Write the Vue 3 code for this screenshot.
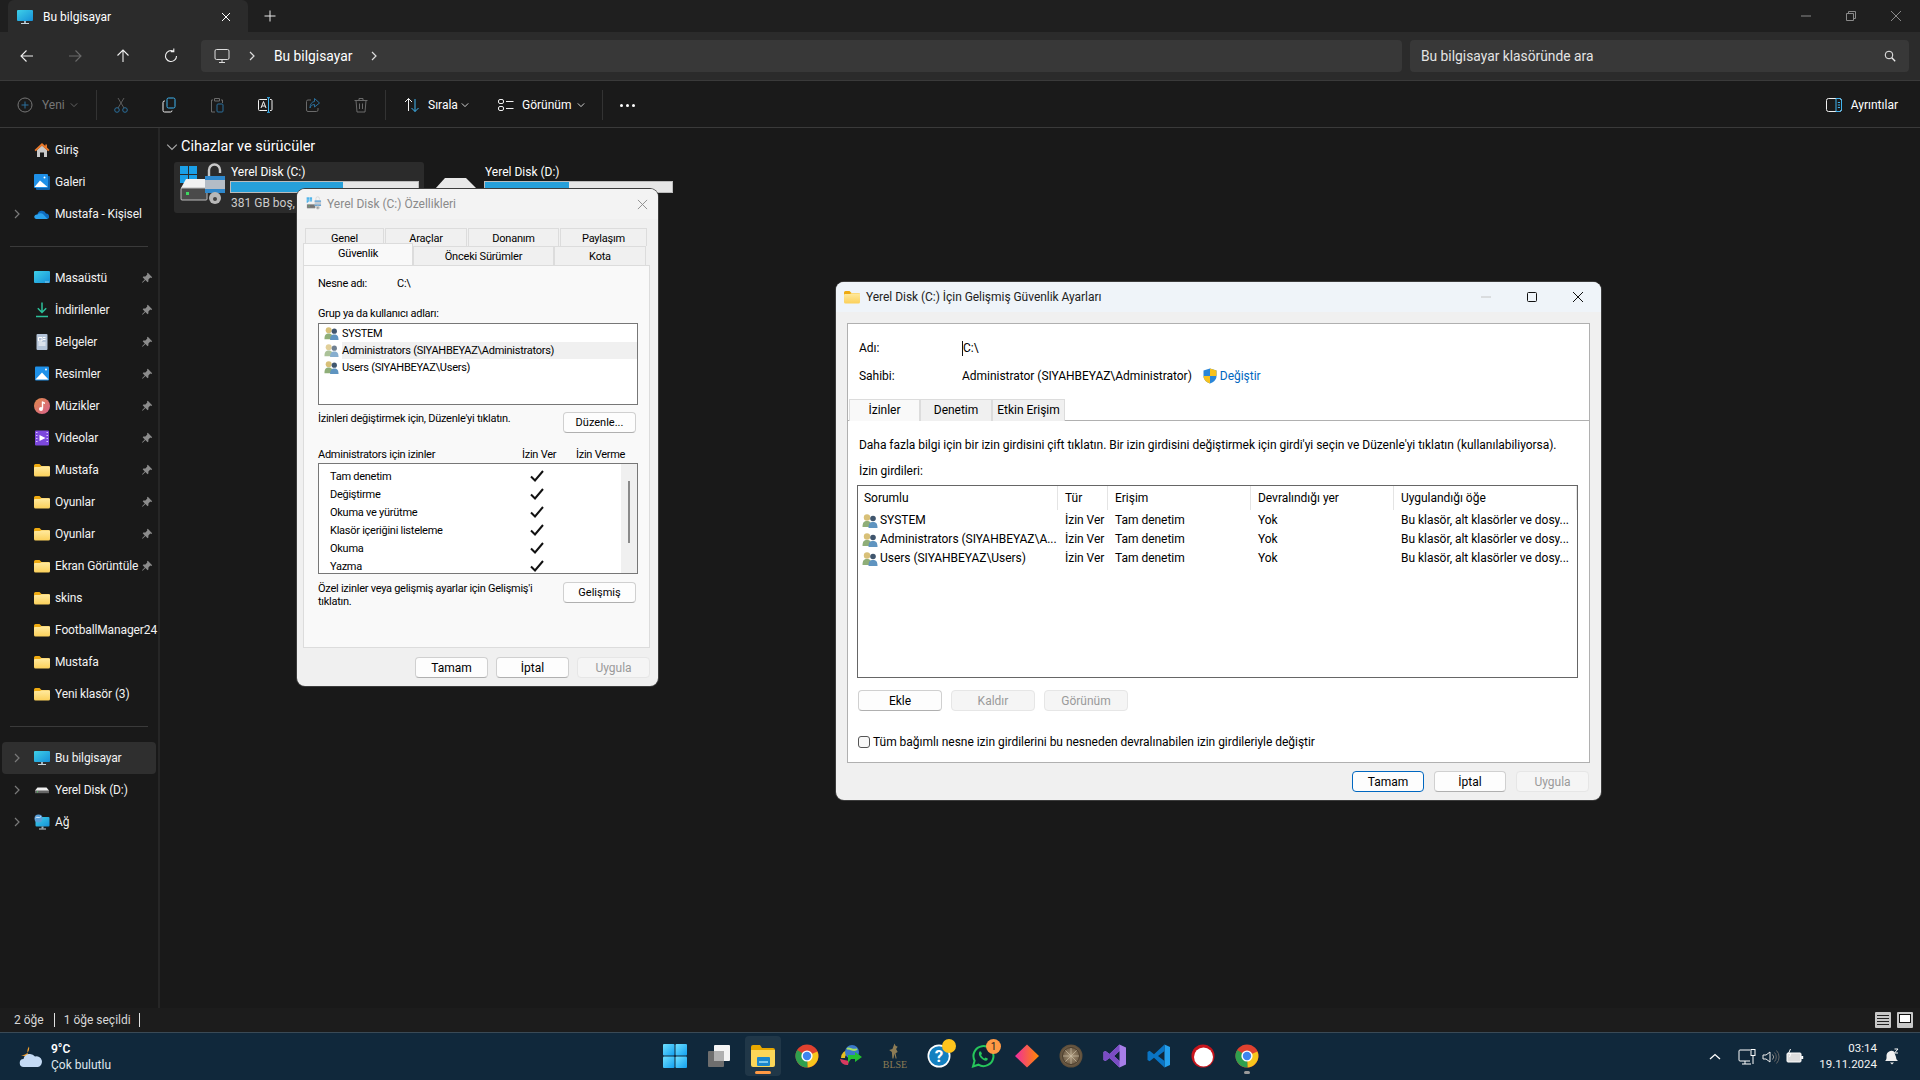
<template>
  <div class="screen">
    <!-- ikon sprite -->
    <svg class="sprite" width="0" height="0" aria-hidden="true">
      <defs>
        <linearGradient id="gScreen" x1="0" y1="0" x2="1" y2="1"><stop offset="0" stop-color="#3ed0e8" /><stop offset="1" stop-color="#1690d8" /></linearGradient>
        <linearGradient id="gFolder" x1="0" y1="0" x2="0" y2="1"><stop offset="0" stop-color="#ffeaa0" /><stop offset="1" stop-color="#fbd05a" /></linearGradient>
        <linearGradient id="gMusic" x1="0" y1="0" x2="1" y2="1"><stop offset="0" stop-color="#e08a4a" /><stop offset="1" stop-color="#d8608c" /></linearGradient>
        <linearGradient id="gDiamond" x1="0" y1="0" x2="1" y2="0"><stop offset="0" stop-color="#f02ba0" /><stop offset="1" stop-color="#ff8a00" /></linearGradient>
        <linearGradient id="gWin" x1="0" y1="0" x2="1" y2="1"><stop offset="0" stop-color="#6fe0ff" /><stop offset="1" stop-color="#12a0f0" /></linearGradient>
        <radialGradient id="gCoin"><stop offset="0" stop-color="#a89478" /><stop offset="1" stop-color="#5c4c38" /></radialGradient>
      </defs>
      <symbol id="pc" viewBox="0 0 16 16"><rect x="0" y="1" width="16" height="11" rx="1" fill="url(#gScreen)" /><rect x="7" y="12" width="2" height="2.5" fill="#9fb4c0" /><rect x="4" y="14" width="8" height="1" fill="#c8d4dc" /></symbol>
      <symbol id="folder" viewBox="0 0 16 16"><path d="M0 3.5Q0 2 1.5 2H5.5L7.5 4H14.5Q16 4 16 5.5V8H0Z" fill="#eeaa10" /><path d="M0 6Q0 5 1 5H6L7.5 4.2H15Q16 4.2 16 5.2V13Q16 14.5 14.5 14.5H1.5Q0 14.5 0 13Z" fill="url(#gFolder)" /></symbol>
      <symbol id="home" viewBox="0 0 16 16"><path d="M3 8L8 3.5L13 8V15H10V10.5H6V15H3Z" fill="#c9c9c9" /><path d="M8 1L0.5 8L1.8 9.3L8 3.7L14.2 9.3L15.5 8L13 5.6V2.5H11.3V4Z" fill="#e8782a" /></symbol>
      <symbol id="gallery" viewBox="0 0 16 16"><rect x="2" y="2" width="14" height="14" rx="1" fill="#0e5fa8" /><rect x="0" y="0" width="14" height="14" rx="1" fill="#1e90e8" /><path d="M0.5 13L6 6.5L13.5 13Z" fill="#fff" /><circle cx="10.5" cy="3.5" r="1" fill="#fff" /></symbol>
      <symbol id="cloud" viewBox="0 0 16 16"><path d="M3.5 9a4.4 4.4 0 0 1 8.5-1.5a2.9 2.9 0 0 1 1.5 5.5H2.5a2.2 2.2 0 0 1 1-4Z" fill="#0f6cc0" /><path d="M0.2 11a2.6 2.6 0 0 1 3.3-2.5a4 4 0 0 1 6 0L13.5 12.9H2.5A2.3 2.3 0 0 1 0.2 11Z" fill="#2aa2ee" /></symbol>
      <symbol id="download" viewBox="0 0 16 16"><path d="M8 0.5V10.5M3.8 6.2L8 10.5L12.2 6.2M2 14.5H14" stroke="#2cc09a" stroke-width="1.5" fill="none" /></symbol>
      <symbol id="doc" viewBox="0 0 16 16"><rect x="2.5" y="0" width="11" height="16" rx="1" fill="#b4c4d8" /><path d="M4.5 3.5H8V7H4.5ZM9 3.5H11.5M9 5.5H11.5M4.5 9H11.5M4.5 11H11.5" stroke="#fff" fill="none" /></symbol>
      <symbol id="pictures" viewBox="0 0 16 16"><rect x="1" y="0.5" width="14" height="14" rx="1" fill="#1e90e8" /><path d="M1.5 13.5L8 6.5L14.5 13.5Z" fill="#fff" /><circle cx="12" cy="3.5" r="1" fill="#fff" /></symbol>
      <symbol id="music" viewBox="0 0 16 16"><circle cx="8" cy="8" r="8" fill="url(#gMusic)" /><path d="M8.5 3.5V10.5" stroke="#fff" stroke-width="1.4" /><circle cx="7" cy="11" r="2" fill="#fff" /><path d="M8.5 3.5L11 4.5V6L8.5 5.2Z" fill="#fff" /></symbol>
      <symbol id="video" viewBox="0 0 16 16"><rect x="1" y="0.5" width="14" height="15" rx="1" fill="#7c48dc" /><path d="M5.5 5L11.5 8L5.5 11Z" fill="#fff" /><path d="M2 2.5H3.5M2 5.5H3.5M2 8.5H3.5M2 11.5H3.5M12.5 2.5H14M12.5 5.5H14M12.5 8.5H14M12.5 11.5H14" stroke="#d8c4ff" /></symbol>
      <symbol id="desktop" viewBox="0 0 16 16"><rect x="0" y="1" width="16" height="12" rx="1" fill="url(#gScreen)" /><path d="M11.5 12H12.5M13.5 12H14.5" stroke="#fff" /></symbol>
      <symbol id="drive" viewBox="0 0 16 16"><path d="M1 8.5L3.5 5.5H12.5L15 8.5V11H1Z" fill="#eee" /><rect x="1" y="8.5" width="14" height="2.7" fill="#666" /><rect x="3" y="9.4" width="1" height="1" fill="#4fd860" /></symbol>
      <symbol id="net" viewBox="0 0 16 16"><rect x="1.5" y="3" width="14" height="9.5" rx="1" fill="url(#gScreen)" /><rect x="7.5" y="12.5" width="2" height="2" fill="#9fb4c0" /><rect x="5" y="14.5" width="7" height="1" fill="#c8d4dc" /><circle cx="4.5" cy="4.5" r="4" fill="#5a9fd8" /><path d="M1.5 4C3 2 5 5 7 2.5" stroke="#d8ecff" fill="none" /></symbol>
      <symbol id="pin" viewBox="0 0 12 12"><path d="M6.8 0.8L11.2 5.2L10.3 5.9L9.3 5.6L7.4 7.5L7.4 9.5L6.6 10.2L4.4 8L1.6 10.8L1 10.2L3.8 7.4L1.7 5.3L2.4 4.5L4.4 4.5L6.3 2.6L6 1.6Z" fill="#8c8c8c" /></symbol>
      <symbol id="chev-r" viewBox="0 0 10 10"><path d="M3 1L7 5L3 9" fill="none" stroke="currentColor" stroke-width="1.2" /></symbol>
      <symbol id="chev-d" viewBox="0 0 10 10"><path d="M1 3L5 7L9 3" fill="none" stroke="currentColor" stroke-width="1" /></symbol>
      <symbol id="users" viewBox="0 0 16 16"><circle cx="5" cy="4.5" r="3.2" fill="#d8c078" /><path d="M0.5 14C0.5 9.5 2 8 5 8S9.5 9.5 9.5 14Z" fill="#8fae78" /><circle cx="11" cy="5.5" r="2.8" fill="#40566e" /><path d="M6.5 15C6.5 10.5 8 9 11 9S15.5 10.5 15.5 15Z" fill="#5f94c0" /></symbol>
      <symbol id="drivec" viewBox="0 0 50 50">
        <rect x="2" y="4" width="8" height="8" fill="#1aa0e8" /><rect x="11" y="4" width="8" height="8" fill="#1aa0e8" /><rect x="2" y="13" width="8" height="8" fill="#1aa0e8" /><rect x="11" y="13" width="8" height="8" fill="#1aa0e8" />
        <path d="M3 26L8 17H28V38H3Z" fill="#f2f2f2" /><rect x="3" y="26" width="26" height="12" rx="1" fill="#4a4a4a" stroke="#bbb" /><rect x="8" y="30" width="3" height="3" fill="#3ed860" />
        <path d="M31 14V8A5.5 5.5 0 0 1 42 8V11" fill="none" stroke="#c8c8c8" stroke-width="2.4" />
        <rect x="27" y="14" width="20" height="17" rx="2" fill="#b4bcc6" /><rect x="27" y="14" width="20" height="4" fill="#2f88cc" /><rect x="27" y="27" width="20" height="4" fill="#2f88cc" />
        <circle cx="37" cy="36" r="6" fill="#b8b8b8" /><circle cx="37" cy="37" r="2" fill="#444" />
      </symbol>
      <symbol id="chrome" viewBox="0 0 24 24"><circle cx="12" cy="12" r="11.5" fill="#e0412f" /><path d="M12 12L22.4 7.5A11.5 11.5 0 0 1 12.5 23.5Z" fill="#f8c51c" /><path d="M12 12L12.5 23.5A11.5 11.5 0 0 1 2.2 6Z" fill="#2fa04e" /><circle cx="12" cy="12" r="5.6" fill="#fff" /><circle cx="12" cy="12" r="4.2" fill="#3f85f0" /></symbol>
      <symbol id="idm" viewBox="0 0 24 24"><path d="M2 14A8 8 0 0 1 10 6V10A4 4 0 0 0 6 14Z" fill="#e8c020" /><path d="M1 15A7 7 0 0 0 9 21L10 17Z" fill="#d83a60" /><circle cx="13" cy="8" r="7" fill="#3a78c8" /><path d="M8 5C11 3 14 8 18 5" stroke="#a8e060" stroke-width="2" fill="none" /><path d="M9 11H16V8L23 13L16 18V15H12L9 19Z" fill="#22c030" /></symbol>
      <symbol id="horse" viewBox="0 0 16 16"><path d="M6 15L5.5 9L3 7L6 6L8 1L9 3L11 4L9.5 6L11 9L9 10L10 15H9L8 10.5L7 15Z" fill="#8d7c55" /></symbol>
      <symbol id="help" viewBox="0 0 24 24"><circle cx="12" cy="12" r="11.5" fill="#fff" /><circle cx="12" cy="12" r="9.8" fill="#1480c0" /></symbol>
      <symbol id="wa" viewBox="0 0 24 24"><path d="M2 22.5L3.6 16.7A10 10 0 1 1 7.4 20.7Z" fill="#0d2233" stroke="#26c65b" stroke-width="2" /><path d="M8.5 7.5C7.5 9 7.5 11 9.5 13.5S14 17 16 16.5L17 14.8L14.6 13.5L13.5 14.5C12 13.8 10.8 12.6 10 11L11 10L10 7.5Z" fill="#26c65b" /></symbol>
      <symbol id="diamond" viewBox="0 0 24 24"><path d="M12 0.5L24 12L12 23.5L0 12Z" fill="url(#gDiamond)" /></symbol>
      <symbol id="coin" viewBox="0 0 24 24"><circle cx="12" cy="12" r="11.5" fill="url(#gCoin)" /><circle cx="12" cy="12" r="8.5" fill="none" stroke="#4a3c2c" /><path d="M12 4V20M4 12H20M6.4 6.4L17.6 17.6M17.6 6.4L6.4 17.6" stroke="#c8bca4" stroke-width=".7" /></symbol>
      <symbol id="vs" viewBox="0 0 24 24"><path d="M16.5 0.5L23 3.5V20.5L16.5 23.5L6.5 14L2.5 17L0.5 16V8L2.5 7L6.5 10Z" fill="#a77ee8" /><path d="M16.5 7L11 12L16.5 17Z" fill="#0d2233" /><path d="M2.5 9.5V14.5L5 12Z" fill="#0d2233" /><path d="M16.5 0.5L6.5 10L2.5 7L0.5 8V16L2.5 17L6.5 14L16.5 23.5V17L11 12L16.5 7Z" fill="#7a4cc4" /></symbol>
      <symbol id="vscode" viewBox="0 0 24 24"><path d="M17.5 0.5L23 3V21L17.5 23.5Z" fill="#24a0ed" /><path d="M17.5 0.5L7 10.2L2.6 6.8L0.5 8V16L2.6 17.2L7 13.8L17.5 23.5V17L11 12L17.5 7Z" fill="#0a74c4" /></symbol>
      <symbol id="redball" viewBox="0 0 24 24"><circle cx="12" cy="12" r="11.5" fill="#c8141c" /><circle cx="12.5" cy="13" r="9.5" fill="#fff" /></symbol>
      <symbol id="win" viewBox="0 0 24 24"><rect x="0" y="0" width="11.5" height="11.5" rx="1" fill="url(#gWin)" /><rect x="12.5" y="0" width="11.5" height="11.5" rx="1" fill="url(#gWin)" /><rect x="0" y="12.5" width="11.5" height="11.5" rx="1" fill="url(#gWin)" /><rect x="12.5" y="12.5" width="11.5" height="11.5" rx="1" fill="url(#gWin)" /></symbol>
      <symbol id="tview" viewBox="0 0 24 24"><rect x="7" y="1" width="16" height="16" rx="1" fill="#f4f4f4" /><rect x="1" y="7" width="16" height="16" rx="1" fill="#6e6e6e" /><rect x="7" y="7" width="10" height="10" fill="#b0b0b0" /></symbol>
      <symbol id="explorer" viewBox="0 0 24 24"><path d="M0 3Q0 1 2 1H9L11 4H22Q24 4 24 6V10H0Z" fill="#e8a800" /><path d="M0 6H24V21Q24 23 22 23H2Q0 23 0 21Z" fill="#fbd658" /><rect x="6" y="13" width="13" height="9" rx="1" fill="#1a86cc" /><rect x="8" y="17" width="9" height="2" fill="#7cc8f0" /></symbol>
    </svg>

    <header class="titlebar">
      <div class="tab">
        <svg class="ic16"><use href="#pc" /></svg>
        <span class="tab-text">Bu bilgisayar</span>
        <svg class="tab-x" viewBox="0 0 10 10"><path d="M1 1L9 9M9 1L1 9" stroke="#fff" /></svg>
      </div>
      <svg class="tab-plus" viewBox="0 0 12 12"><path d="M6 0.5V11.5M0.5 6H11.5" stroke="#e8e8e8" /></svg>
      <div class="win-ctrls">
        <span class="wc"><svg viewBox="0 0 12 12"><path d="M1 6H11" stroke="#8a8a8a" /></svg></span>
        <span class="wc"><svg viewBox="0 0 12 12"><path d="M1.5 3.5H8.5V10.5H1.5ZM3.5 3.5V1.5H10.5V8.5H8.5" stroke="#8a8a8a" fill="none" /></svg></span>
        <span class="wc"><svg viewBox="0 0 12 12"><path d="M1 1L11 11M11 1L1 11" stroke="#8a8a8a" /></svg></span>
      </div>
    </header>

    <nav class="navbar">
      <div class="nav-btns">
        <svg class="nav-ic" viewBox="0 0 16 16"><path d="M14 8H2M7.5 2.5L2 8L7.5 13.5" stroke="#f0f0f0" fill="none" stroke-width="1.1" /></svg>
        <svg class="nav-ic" viewBox="0 0 16 16"><path d="M2 8H14M8.5 2.5L14 8L8.5 13.5" stroke="#6a6a6a" fill="none" stroke-width="1.1" /></svg>
        <svg class="nav-ic" viewBox="0 0 16 16"><path d="M8 14V2M2.5 7.5L8 2L13.5 7.5" stroke="#f0f0f0" fill="none" stroke-width="1.1" /></svg>
        <svg class="nav-ic" viewBox="0 0 16 16"><path d="M13.5 8A5.5 5.5 0 1 1 10.5 3.1M10.8 0.5V3.6H7.8" stroke="#f0f0f0" fill="none" stroke-width="1.1" /></svg>
      </div>
      <div class="address">
        <svg class="addr-pc" viewBox="0 0 16 16"><rect x="1" y="1.5" width="14" height="10" rx="1.5" stroke="#ddd" fill="none" /><path d="M8 11.5V14M5 14.5H11" stroke="#ddd" /></svg>
        <svg class="addr-chev"><use href="#chev-r" /></svg>
        <span class="addr-text">Bu bilgisayar</span>
        <svg class="addr-chev"><use href="#chev-r" /></svg>
      </div>
      <div class="search">
        <span>Bu bilgisayar klasöründe ara</span>
        <svg viewBox="0 0 12 12" class="search-ic"><circle cx="5" cy="5" r="3.8" stroke="#eee" fill="none" /><path d="M7.8 7.8L11.2 11.2" stroke="#eee" stroke-width="1.3" /></svg>
      </div>
    </nav>

    <div class="toolbar">
      <div class="tb-new">
        <svg class="ic16" viewBox="0 0 16 16"><circle cx="8" cy="8" r="7" stroke="#767676" fill="none" /><path d="M8 4.5V11.5M4.5 8H11.5" stroke="#2a6f9c" /></svg>
        <span class="dim">Yeni</span>
        <svg class="tb-chev dim new-chev"><use href="#chev-d" /></svg>
      </div>
      <i class="tb-sep"></i>
      <span class="tb-btn"><svg viewBox="0 0 16 16"><path d="M5 1L11 11M11 1L5 11" stroke="#5c5c5c" fill="none" /><circle cx="4" cy="13" r="2.3" stroke="#2a6f9c" fill="none" /><circle cx="12" cy="13" r="2.3" stroke="#2a6f9c" fill="none" /></svg></span>
      <span class="tb-btn"><svg viewBox="0 0 16 16"><rect x="6" y="1" width="8" height="10" rx="1.5" stroke="#3fb4f0" fill="none" /><path d="M4 4H3.5A1.5 1.5 0 0 0 2 5.5V13.5A1.5 1.5 0 0 0 3.5 15H9.5A1.5 1.5 0 0 0 11 13.5" stroke="#f0f0f0" fill="none" /></svg></span>
      <span class="tb-btn"><svg viewBox="0 0 16 16"><path d="M4 3H2.5V15H6M12 3H13.5V6M5.5 1.5H10.5V4H5.5Z" stroke="#6a6a6a" fill="none" /><rect x="8" y="7" width="6" height="8" rx="1" stroke="#2a6f9c" fill="none" /></svg></span>
      <span class="tb-btn"><svg viewBox="0 0 16 16"><path d="M10 2.5H2.5A1 1 0 0 0 1.5 3.5V12.5A1 1 0 0 0 2.5 13.5H10M13 2.5H14A1 1 0 0 1 15 3.5V12.5A1 1 0 0 1 14 13.5H13" stroke="#f0f0f0" fill="none" /><path d="M11.5 1V15M10 0.7H13M10 15.3H13" stroke="#3fb4f0" fill="none" /><path d="M4 11L6.5 4.5L9 11M5 9H8" stroke="#f0f0f0" fill="none" /></svg></span>
      <span class="tb-btn"><svg viewBox="0 0 16 16"><path d="M6 3H3A1.5 1.5 0 0 0 1.5 4.5V13A1.5 1.5 0 0 0 3 14.5H11.5A1.5 1.5 0 0 0 13 13V11" stroke="#6a6a6a" fill="none" /><path d="M9.5 1.5L14.5 6L9.5 10V7.5C7 7.5 5.5 9 5 11C5 7 7 4.7 9.5 4.5Z" stroke="#2a6f9c" fill="none" /></svg></span>
      <span class="tb-btn"><svg viewBox="0 0 16 16"><path d="M1.5 3.5H14.5M6 3.5V1.5H10V3.5M3 3.5L4 15H12L13 3.5M6.5 6.5V12M9.5 6.5V12" stroke="#6a6a6a" fill="none" /></svg></span>
      <i class="tb-sep"></i>
      <div class="tb-menu tb-sort">
        <svg class="ic16" viewBox="0 0 16 16"><path d="M4.5 14V1.5M1 5L4.5 1.5L8 5" stroke="#f0f0f0" fill="none" /><path d="M11 2V14.5M7.5 11L11 14.5L14.5 11" stroke="#3fb4f0" fill="none" /></svg>
        <span>Sırala</span>
        <svg class="tb-chev"><use href="#chev-d" /></svg>
      </div>
      <div class="tb-menu tb-view">
        <svg class="ic16" viewBox="0 0 16 16"><rect x="0.5" y="2.5" width="5" height="4" rx="1.5" stroke="#f0f0f0" fill="none" /><rect x="0.5" y="9.5" width="5" height="4" rx="1.5" stroke="#f0f0f0" fill="none" /><path d="M8 4.5H15.5M8 11.5H15.5" stroke="#f0f0f0" /></svg>
        <span>Görünüm</span>
        <svg class="tb-chev"><use href="#chev-d" /></svg>
      </div>
      <i class="tb-sep tb-sep-last"></i>
      <span class="tb-dots"><i></i><i></i><i></i></span>
      <div class="tb-details">
        <svg class="ic16" viewBox="0 0 16 16"><rect x="0.5" y="1.5" width="15" height="13" rx="2" stroke="#f0f0f0" fill="none" /><path d="M10 1.5V14.5H13.5A2 2 0 0 0 15.5 12.5V3.5A2 2 0 0 0 13.5 1.5ZM11.8 5.5H14M11.8 8H14M11.8 10.5H14" stroke="#3fb4f0" fill="none" /></svg>
        <span>Ayrıntılar</span>
      </div>
    </div>

    <div class="main">
      <aside class="sidebar">
        <template v-for="(group, g) in navGroups" :key="g">
          <div class="nav-sep" v-if="g > 0"><i></i></div>
          <div class="nav-row" :class="{ selected: item.selected }" v-for="item in group" :key="item.label + item.icon">
            <svg class="nav-chev" v-if="item.arrow"><use href="#chev-r" /></svg>
            <svg class="nav-icon"><use :href="'#' + item.icon" /></svg>
            <span class="nav-label">{{ item.label }}</span>
            <svg class="nav-pin" v-if="item.pin"><use href="#pin" /></svg>
          </div>
        </template>
      </aside>
      <section class="content">
        <div class="group-head">
          <svg class="group-chev"><use href="#chev-d" /></svg>
          <span>Cihazlar ve sürücüler</span>
        </div>
        <div class="tiles">
          <div class="tile active">
            <svg class="tile-ic"><use href="#drivec" /></svg>
            <div class="tile-info">
              <div class="tile-name">Yerel Disk (C:)</div>
              <div class="bar"><i :style="{ width: '60%' }"></i></div>
              <div class="tile-sub">381 GB boş,</div>
            </div>
          </div>
          <div class="tile">
            <svg class="tile-ic" viewBox="0 0 50 50"><path d="M5 27L15 16H36L47 27V40H5Z" fill="#e8e8e8" /></svg>
            <div class="tile-info">
              <div class="tile-name">Yerel Disk (D:)</div>
              <div class="bar"><i :style="{ width: '45%' }"></i></div>
            </div>
          </div>
        </div>
      </section>
    </div>

    <footer class="statusbar">
      <span class="st-count">2 öğe</span><i class="st-sep"></i>
      <span>1 öğe seçildi</span><i class="st-sep"></i>
      <div class="st-views">
        <span class="st-view"><svg viewBox="0 0 16 16"><path d="M2 3.5H14M2 6.5H14M2 9.5H14M2 12.5H14" stroke="#222" /></svg></span>
        <span class="st-view"><svg viewBox="0 0 16 16"><rect x="2.5" y="2.5" width="11" height="8" fill="#111" stroke="#111" /><rect x="3" y="3" width="10" height="7" fill="#fff" /></svg></span>
      </div>
    </footer>

    <div class="taskbar">
      <div class="weather">
        <svg class="weather-ic" viewBox="0 0 24 24"><path d="M2 10A7 7 0 0 0 10 1.5A8 8 0 0 0 14 14Z" fill="#f0a030" /><path d="M5 22A4 4 0 0 1 4.5 14A6.5 6.5 0 0 1 16 11.5A5.3 5.3 0 0 1 19 22Z" fill="#c4daf4" /></svg>
        <div class="weather-text"><b>9°C</b><span>Çok bulutlu</span></div>
      </div>
      <div class="apps">
        <div class="app" :class="{ running: app.running }" v-for="app in apps" :key="app.key">
          <template v-if="app.icon === 'blse'">
            <div class="blse"><svg><use href="#horse" /></svg><span>BLSE</span></div>
          </template>
          <svg class="app-ic" v-else><use :href="'#' + app.icon" /></svg>
          <span class="glyph" v-if="app.glyph">{{ app.glyph }}</span>
          <i class="badge-plain" v-if="app.dot"></i>
          <span class="badge-num" v-if="app.badge">{{ app.badge }}</span>
          <i class="run-bar" v-if="app.running"></i>
          <i class="run-dot" v-if="app.open"></i>
        </div>
      </div>
      <div class="tray">
        <svg class="tray-chev" viewBox="0 0 12 12"><path d="M1 8L6 3.5L11 8" stroke="#fff" stroke-width="1.3" fill="none" /></svg>
        <svg class="tray-ic" viewBox="0 0 18 18"><path d="M12 2H2A1 1 0 0 0 1 3V12A1 1 0 0 0 2 13H12M7 13V16M4 16H13" stroke="#fff" fill="none" /><rect x="13" y="1.5" width="4" height="6" stroke="#fff" fill="none" /><path d="M15 7.5V16" stroke="#fff" /></svg>
        <svg class="tray-ic" viewBox="0 0 18 18"><path d="M1 7V11H4L8 14V4L4 7Z" stroke="#eee" fill="none" /><path d="M10.5 6.5A3.5 3.5 0 0 1 10.5 11.5" stroke="#999" fill="none" /><path d="M12.5 4.5A6.5 6.5 0 0 1 12.5 13.5M14.5 2.5A9.5 9.5 0 0 1 14.5 15.5" stroke="#666" fill="none" /></svg>
        <svg class="tray-ic" viewBox="0 0 18 18"><rect x="1" y="5" width="14" height="9" rx="1" stroke="#fff" fill="#ddd" /><rect x="15.2" y="8" width="2" height="3" fill="#fff" /><path d="M4.5 1L2.5 5.5H5L3.5 9" stroke="#fff" fill="none" /></svg>
        <div class="clock"><span>03:14</span><span>19.11.2024</span></div>
        <svg class="tray-ic bell" viewBox="0 0 18 18"><path d="M2 13C4 11.5 3.5 9 3.5 7.5A5 5 0 0 1 11 3.5L13 9C13 11 14 12 15 13Z" fill="#f0f0f0" /><path d="M7 14.5H11L9 16.5Z" fill="#f0f0f0" /><path d="M11.5 1H15L11.5 5H15" stroke="#fff" fill="none" /></svg>
      </div>
    </div>

    <!-- Özellikler penceresi -->
    <div class="dlg props">
      <div class="dlg-title props-title">
        <svg class="ic16 faded"><use href="#drivec" /></svg>
        <span>Yerel Disk (C:) Özellikleri</span>
        <svg class="props-x" viewBox="0 0 12 12"><path d="M1 1L11 11M11 1L1 11" stroke="#8a8a8a" /></svg>
      </div>
      <div class="ptabs-row first">
        <span class="ptab" v-for="t in tabsTop" :key="t.label" :style="{ width: t.w + 'px' }">{{ t.label }}</span>
      </div>
      <div class="ptabs-row second">
        <span class="ptab" :class="{ on: t.on }" v-for="t in tabsBottom" :key="t.label" :style="{ width: t.w + 'px' }">{{ t.label }}</span>
      </div>
      <div class="ppanel">
        <div class="line nesne"><span class="nesne-l">Nesne adı:</span><span>C:\</span></div>
        <div class="line grup">Grup ya da kullanıcı adları:</div>
        <div class="ulist">
          <div class="urow" :class="{ hl: i === 1 }" v-for="(u, i) in propUsers" :key="u">
            <svg class="ic15"><use href="#users" /></svg><span>{{ u }}</span>
          </div>
        </div>
        <div class="split first-split">
          <span class="split-text">İzinleri değiştirmek için, Düzenle'yi tıklatın.</span>
          <button class="wbtn side">Düzenle...</button>
        </div>
        <div class="perm-head"><span>Administrators için izinler</span><span>İzin Ver</span><span>İzin Verme</span></div>
        <div class="perm-list">
          <div class="perm-rows">
            <div class="perm" v-for="p in perms" :key="p">
              <span>{{ p }}</span>
              <svg class="check" viewBox="0 0 14 12"><path d="M1 6.5L5 10.5L13 1" stroke="#111" stroke-width="2" fill="none" /></svg>
            </div>
          </div>
          <div class="vscroll"><i></i></div>
        </div>
        <div class="split second-split">
          <span class="split-text wrap">Özel izinler veya gelişmiş ayarlar için Gelişmiş'i tıklatın.</span>
          <button class="wbtn side">Gelişmiş</button>
        </div>
      </div>
      <div class="props-foot">
        <button class="wbtn w73">Tamam</button>
        <button class="wbtn w73">İptal</button>
        <button class="wbtn w73 off">Uygula</button>
      </div>
    </div>

    <!-- Gelişmiş güvenlik penceresi -->
    <div class="dlg adv">
      <div class="dlg-title adv-title">
        <svg class="ic16"><use href="#folder" /></svg>
        <span class="adv-name">Yerel Disk (C:) İçin Gelişmiş Güvenlik Ayarları</span>
        <div class="adv-ctrls">
          <span class="wc"><svg viewBox="0 0 12 12"><path d="M1 6H11" stroke="#c4c4c4" /></svg></span>
          <span class="wc"><svg viewBox="0 0 12 12"><rect x="1.5" y="1.5" width="9" height="9" rx="1" stroke="#111" fill="none" /></svg></span>
          <span class="wc"><svg viewBox="0 0 12 12"><path d="M1 1L11 11M11 1L1 11" stroke="#111" /></svg></span>
        </div>
      </div>
      <div class="adv-panel">
        <div class="kv kv1"><span class="k">Adı:</span><span class="v caret">C:\</span></div>
        <div class="kv kv2">
          <span class="k">Sahibi:</span><span>Administrator (SIYAHBEYAZ\Administrator)</span>
          <svg class="shield" viewBox="0 0 14 16"><path d="M7 0.5L13.5 2.5V8C13.5 12 10 14.5 7 15.5C4 14.5 0.5 12 0.5 8V2.5Z" fill="#2a86d8" /><path d="M7 0.5L13.5 2.5V8H7ZM7 8V15.5C4 14.5 0.5 12 0.5 8Z" fill="#f8c21c" /></svg>
          <a class="link">Değiştir</a>
        </div>
        <div class="atabs">
          <span class="atab on" style="width:71px">İzinler</span>
          <span class="atab" style="width:72px">Denetim</span>
          <span class="atab" style="width:73px">Etkin Erişim</span>
        </div>
        <p class="desc">Daha fazla bilgi için bir izin girdisini çift tıklatın. Bir izin girdisini değiştirmek için girdi'yi seçin ve Düzenle'yi tıklatın (kullanılabiliyorsa).</p>
        <p class="desc entries">İzin girdileri:</p>
        <div class="acl">
          <div class="acl-row acl-head">
            <span v-for="h in aclHead" :key="h">{{ h }}</span>
          </div>
          <div class="acl-row" v-for="r in aclRows" :key="r">
            <span class="who"><svg class="ic16"><use href="#users" /></svg>{{ r }}</span>
            <span>İzin Ver</span><span>Tam denetim</span><span>Yok</span><span>Bu klasör, alt klasörler ve dosy...</span>
          </div>
        </div>
        <div class="acl-btns">
          <button class="wbtn w84">Ekle</button>
          <button class="wbtn w84 off">Kaldır</button>
          <button class="wbtn w84 off">Görünüm</button>
        </div>
        <label class="replace"><i class="box"></i>Tüm bağımlı nesne izin girdilerini bu nesneden devralınabilen izin girdileriyle değiştir</label>
      </div>
      <div class="adv-foot">
        <button class="wbtn w72 primary">Tamam</button>
        <button class="wbtn w72">İptal</button>
        <button class="wbtn w73 off">Uygula</button>
      </div>
    </div>
  </div>
</template>

<script setup>
const navGroups = [
  [
    { label: 'Giriş', icon: 'home' },
    { label: 'Galeri', icon: 'gallery' },
    { label: 'Mustafa - Kişisel', icon: 'cloud', arrow: true }
  ],
  [
    { label: 'Masaüstü', icon: 'desktop', pin: true },
    { label: 'İndirilenler', icon: 'download', pin: true },
    { label: 'Belgeler', icon: 'doc', pin: true },
    { label: 'Resimler', icon: 'pictures', pin: true },
    { label: 'Müzikler', icon: 'music', pin: true },
    { label: 'Videolar', icon: 'video', pin: true },
    { label: 'Mustafa', icon: 'folder', pin: true },
    { label: 'Oyunlar', icon: 'folder', pin: true },
    { label: 'Oyunlar ', icon: 'folder', pin: true },
    { label: 'Ekran Görüntüle', icon: 'folder', pin: true },
    { label: 'skins', icon: 'folder' },
    { label: 'FootballManager24', icon: 'folder' },
    { label: 'Mustafa ', icon: 'folder' },
    { label: 'Yeni klasör (3)', icon: 'folder' }
  ],
  [
    { label: 'Bu bilgisayar', icon: 'pc', arrow: true, selected: true },
    { label: 'Yerel Disk (D:)', icon: 'drive', arrow: true },
    { label: 'Ağ', icon: 'net', arrow: true }
  ]
]

const apps = [
  { key: 'win', icon: 'win' },
  { key: 'tview', icon: 'tview' },
  { key: 'explorer', icon: 'explorer', running: true },
  { key: 'chrome', icon: 'chrome' },
  { key: 'idm', icon: 'idm' },
  { key: 'blse', icon: 'blse' },
  { key: 'help', icon: 'help', dot: true, glyph: '?' },
  { key: 'wa', icon: 'wa', badge: '1' },
  { key: 'diamond', icon: 'diamond' },
  { key: 'coin', icon: 'coin' },
  { key: 'vs', icon: 'vs' },
  { key: 'vscode', icon: 'vscode' },
  { key: 'redball', icon: 'redball' },
  { key: 'chrome2', icon: 'chrome', open: true }
]

const tabsTop = [
  { label: 'Genel', w: 79 },
  { label: 'Araçlar', w: 82 },
  { label: 'Donanım', w: 91 },
  { label: 'Paylaşım', w: 87 }
]
const tabsBottom = [
  { label: 'Güvenlik', w: 110, on: true },
  { label: 'Önceki Sürümler', w: 141 },
  { label: 'Kota', w: 92 }
]
const propUsers = ['SYSTEM', 'Administrators (SIYAHBEYAZ\\Administrators)', 'Users (SIYAHBEYAZ\\Users)']
const perms = ['Tam denetim', 'Değiştirme', 'Okuma ve yürütme', 'Klasör içeriğini listeleme', 'Okuma', 'Yazma']
const aclHead = ['Sorumlu', 'Tür', 'Erişim', 'Devralındığı yer', 'Uygulandığı öğe']
const aclRows = ['SYSTEM', 'Administrators (SIYAHBEYAZ\\A...', 'Users (SIYAHBEYAZ\\Users)']
</script>

<style>
html, body { margin: 0; background: #191919; }
</style>

<style scoped>
.screen {
  position: relative;
  width: 1920px;
  height: 1080px;
  overflow: hidden;
  display: flex;
  flex-direction: column;
  background: #191919;
  color: #fff;
  font-family: Roboto, "Noto Sans", sans-serif;
  font-size: 12px;
}
.sprite { position: absolute; }
svg { display: block; flex: none; }
.ic16 { width: 16px; height: 16px; }
.ic15 { width: 15px; height: 15px; }
.faded { opacity: .75; }

/* pencere üstü */
.titlebar {
  height: 32px;
  flex: none;
  display: flex;
  align-items: flex-end;
  background: #1f1f1f;
}
.tab {
  width: 240px;
  height: 32px;
  margin-left: 8px;
  padding: 1px 0 0 9px;
  box-sizing: border-box;
  display: flex;
  align-items: center;
  background: #2b2b2b;
  border-radius: 6px 6px 0 0;
}
.tab-text { margin-left: 10px; width: 178px; }
.tab-x { width: 10px; height: 10px; }
.tab-plus { width: 12px; height: 12px; margin: 0 0 10px 16px; }
.win-ctrls { margin-left: auto; margin-right: 2px; align-self: stretch; display: flex; }
.wc { width: 45px; display: flex; align-items: center; justify-content: center; }
.wc svg { width: 12px; height: 12px; }

.navbar {
  height: 49px;
  flex: none;
  box-sizing: border-box;
  padding: 8px 11px 8px 0;
  display: flex;
  gap: 8px;
  background: #2b2b2b;
  border-bottom: 1px solid #3a3a3a;
}
.nav-btns { width: 193px; display: flex; align-items: center; padding-left: 19px; box-sizing: border-box; gap: 32px; }
.nav-ic { width: 16px; height: 16px; }
.address {
  width: 1201px;
  background: #383838;
  border-radius: 4px;
  display: flex;
  align-items: center;
  padding-left: 13px;
  box-sizing: border-box;
  font-size: 13.8px;
}
.addr-pc { width: 16px; height: 16px; margin-right: 17px; }
.addr-chev { width: 10px; height: 10px; color: #ddd; }
.addr-text { margin: 0 17px; }
.search {
  flex: 1;
  background: #383838;
  border-radius: 4px;
  display: flex;
  align-items: center;
  justify-content: space-between;
  padding: 0 13px 0 11px;
  font-size: 13.8px;
  color: #e4e4e4;
}
.search-ic { width: 12px; height: 12px; }

.toolbar {
  height: 47px;
  flex: none;
  display: flex;
  align-items: center;
  background: #1a1a1a;
  border-bottom: 1px solid #3a3a3a;
  box-sizing: border-box;
  padding-top: 2px;
}
.dim { color: #767676; }
.tb-new { width: 96px; padding-left: 17px; box-sizing: border-box; display: flex; align-items: center; gap: 9px; }
.new-chev { margin-left: -4px; }
.tb-chev { width: 8px; height: 8px; }
.tb-sep { width: 1px; height: 30px; background: #333; }
.tb-btn { width: 48px; display: flex; justify-content: center; }
.tb-btn svg { width: 16px; height: 16px; }
.tb-menu { display: flex; align-items: center; box-sizing: border-box; }
.tb-sort { width: 102px; padding-left: 18px; }
.tb-sort span { width: 30px; margin: 0 3px 0 8px; }
.tb-view { width: 112px; padding-left: 10px; }
.tb-view span { width: 55px; margin-left: 8px; }
.tb-sep-last { margin-left: 2px; }
.tb-dots { display: flex; gap: 3px; margin-left: 17px; }
.tb-dots i { width: 3px; height: 3px; border-radius: 50%; background: #fff; }
.tb-details { margin-left: auto; margin-right: 22px; display: flex; align-items: center; gap: 9px; }

/* ana alan */
.main { flex: 1; min-height: 0; display: flex; }
.sidebar {
  width: 160px;
  flex: none;
  box-sizing: border-box;
  padding: 6px 2px 0;
  border-right: 2px solid #262626;
  background: #191919;
}
.nav-row {
  position: relative;
  height: 32px;
  display: flex;
  align-items: center;
  padding-left: 32px;
  box-sizing: border-box;
  border-radius: 4px;
}
.nav-row.selected { background: #2f2f2f; }
.nav-chev { position: absolute; left: 10px; top: 11px; width: 10px; height: 10px; color: #7a7a7a; }
.nav-icon { width: 16px; height: 16px; }
.nav-label { margin-left: 5px; flex: 1; min-width: 0; white-space: nowrap; color: #f2f2f2; letter-spacing: -.12px; }
.nav-pin { width: 12px; height: 12px; margin: 0 3px 0 0; }
.nav-sep { height: 32px; display: flex; align-items: center; padding: 0 8px; }
.nav-sep i { flex: 1; height: 1px; background: #3a3a3a; }

.content { flex: 1; padding: 9px 0 0 6px; }
.group-head { height: 19px; display: flex; align-items: center; font-size: 14.5px; margin-bottom: 6px; }
.group-chev { width: 12px; height: 12px; margin-right: 3px; color: #aaa; }
.tiles { display: flex; gap: 6px; margin-left: 8px; }
.tile { width: 250px; height: 51px; display: flex; box-sizing: border-box; padding-left: 4px; border-radius: 3px; }
.tile.active { background: #2b2b2b; }
.tile + .tile { padding-left: 0; }
.tile-ic { width: 50px; height: 50px; }
.tile-info { margin-left: 2px; width: 189px; }
.tile + .tile .tile-info { margin-left: 4px; }
.tile-name { height: 19px; line-height: 20px; padding-left: 1px; }
.bar { height: 12px; width: 189px; background: #e6e6e6; border: 1px solid #bcbcbc; box-sizing: border-box; }
.bar i { display: block; height: 100%; background: #26a0da; }
.tile-sub { margin-top: 3px; padding-left: 1px; color: #ccc; white-space: nowrap; }

.statusbar {
  height: 24px;
  flex: none;
  box-sizing: border-box;
  padding: 0 7px 0 14px;
  display: flex;
  align-items: center;
  background: #1c1c1c;
  color: #d8d8d8;
}
.st-count { margin-right: 2px; }
.st-sep { width: 1px; height: 14px; background: #e0e0e0; margin: 0 9px 0 8px; }
.st-views { margin-left: auto; display: flex; gap: 6px; }
.st-view { width: 16px; height: 16px; background: #c8c8c8; border-radius: 1px; }
.st-view svg { width: 16px; height: 16px; }

.taskbar {
  height: 48px;
  flex: none;
  box-sizing: border-box;
  display: flex;
  align-items: center;
  background: #10283b;
  border-top: 1px solid #3a4a56;
}
.weather { width: 653px; box-sizing: border-box; padding-left: 19px; display: flex; align-items: center; flex: none; }
.weather-ic { width: 24px; height: 24px; }
.weather-text { margin-left: 8px; display: flex; flex-direction: column; line-height: 16px; }
.weather-text b { font-weight: 600; font-size: 12px; }
.weather-text span { color: #dfe6ec; }
.apps { display: flex; margin-bottom: 1px; }
.app { position: relative; width: 44px; height: 40px; display: flex; align-items: center; justify-content: center; }
.app.running::before {
  content: "";
  position: absolute;
  left: 4px;
  top: 0;
  width: 36px;
  height: 40px;
  background: rgba(255, 255, 255, .07);
  border-radius: 4px;
}
.app-ic { width: 24px; height: 24px; position: relative; }
.glyph { position: absolute; left: 0; right: 0; top: 10px; text-align: center; font-size: 17px; line-height: 20px; font-weight: 700; color: #fff; }
.blse { display: flex; flex-direction: column; align-items: center; color: #8d7c55; font: 10px/10px "Liberation Serif", serif; }
.blse svg { width: 17px; height: 18px; }
.badge-plain { position: absolute; left: 25px; top: 3px; width: 14px; height: 14px; border-radius: 50%; background: #ffc41c; }
.badge-num {
  position: absolute;
  left: 25px;
  top: 3px;
  width: 15px;
  height: 15px;
  line-height: 15px;
  border-radius: 50%;
  background: #ff9a45;
  color: #222;
  font-size: 10px;
  text-align: center;
}
.run-bar { position: absolute; left: 14px; top: 35px; width: 16px; height: 3px; border-radius: 2px; background: #ff9a45; }
.run-dot { position: absolute; left: 19px; top: 35px; width: 6px; height: 3px; border-radius: 2px; background: #9a9a9a; }
.tray { margin-left: auto; display: flex; align-items: center; padding-right: 19px; }
.tray-chev { width: 12px; height: 12px; margin-right: 17px; }
.tray-ic { width: 18px; height: 18px; margin-right: 6px; }
.clock { display: flex; flex-direction: column; align-items: flex-end; width: 63px; margin: 0 6px 2px 4px; font-size: 11.5px; line-height: 16px; color: #f4f4f4; }
.bell { margin-right: 0; }

/* pencereler */
.dlg {
  position: absolute;
  display: flex;
  flex-direction: column;
  box-sizing: border-box;
  background: #f0f0f0;
  color: #000;
  border-radius: 8px;
  box-shadow: 0 0 0 1px #3c3c3c;
}
.dlg-title { height: 30px; flex: none; display: flex; align-items: center; border-radius: 8px 8px 0 0; }
.wbtn {
  height: 21px;
  padding: 0;
  background: #fdfdfd;
  border: 1px solid #d0d0d0;
  border-bottom-color: #b0b0b0;
  border-radius: 4px;
  font: inherit;
  color: #000;
}
.wbtn.off { background: #f5f5f5; border-color: #e6e6e6; color: #9a9a9a; }
.wbtn.primary { border-color: #0067c0; }

.props { left: 297px; top: 189px; width: 361px; height: 497px; }
.props-title { background: #f3f3f3; padding-left: 9px; color: #8a8a8a; }
.props-title span { margin-left: 5px; }
.props-x { width: 11px; height: 11px; margin-left: auto; margin-right: 10px; }
.ptabs-row { display: flex; height: 18px; }
.ptabs-row.first { margin: 9px 0 0 8px; gap: 1px; }
.ptabs-row.second { height: 19px; margin-left: 6px; }
.ptab {
  box-sizing: border-box;
  border: 1px solid #dcdcdc;
  border-bottom: none;
  background: #f0f0f0;
  text-align: center;
  line-height: 19px;
  font-size: 11px;
  letter-spacing: -.2px;
}
.ptab.on { background: #f9f9f9; height: 22px; margin-top: -3px; position: relative; z-index: 1; line-height: 20px; }
.ppanel {
  width: 347px;
  height: 383px;
  flex: none;
  box-sizing: border-box;
  margin-left: 6px;
  padding-left: 14px;
  background: #f9f9f9;
  border: 1px solid #dcdcdc;
  font-size: 11px;
  letter-spacing: -.26px;
}
.line { line-height: 16px; }
.nesne { margin-top: 10px; display: flex; }
.nesne-l { width: 79px; }
.grup { margin-top: 14px; }
.ulist { width: 320px; height: 82px; margin-top: 1px; box-sizing: border-box; border: 1px solid #777; background: #fff; }
.urow { height: 17px; display: flex; align-items: center; padding-left: 5px; }
.urow:first-child { margin-top: 1px; }
.urow span { margin-left: 3px; flex: 1; line-height: 17px; }
.urow.hl span { background: #f0f0f0; }
.urow.hl .ic15 { opacity: .75; }
.split { width: 318px; display: flex; justify-content: space-between; }
.first-split { margin-top: 7px; }
.second-split { margin-top: 8px; }
.split-text { line-height: 13px; }
.split-text.wrap { width: 235px; }
.wbtn.side { width: 73px; font-size: 11px; }
.perm-head { margin-top: 14px; display: grid; grid-template-columns: 204px 54px 1fr; line-height: 16px; }
.perm-list { width: 320px; height: 111px; box-sizing: border-box; border: 1px solid #777; background: #fff; display: flex; overflow: hidden; }
.perm-rows { flex: 1; padding: 3px 0 0 11px; }
.perm { height: 18px; display: flex; align-items: center; }
.perm span { width: 200px; }
.check { width: 14px; height: 12px; }
.vscroll { width: 16px; background: #f0f0f0; position: relative; }
.vscroll i { position: absolute; left: 7px; top: 17px; width: 2px; height: 62px; background: #8a8a8a; }
.props-foot { display: flex; justify-content: flex-end; gap: 8px; padding: 9px 8px 0 0; }
.w73 { width: 73px; }

.adv { left: 836px; top: 282px; width: 765px; height: 518px; }
.adv-title { background: #eff4f9; padding-left: 8px; }
.adv-name { margin-left: 6px; color: #222; letter-spacing: -.04px; }
.adv-ctrls { margin-left: auto; display: flex; }
.adv-ctrls .wc { width: 46px; }
.adv-panel {
  width: 743px;
  height: 440px;
  flex: none;
  box-sizing: border-box;
  margin: 11px 0 0 11px;
  background: #fff;
  border: 1px solid #b0b0b0;
  letter-spacing: -.03px;
}
.kv { display: flex; align-items: center; height: 16px; padding-left: 11px; }
.kv1 { margin-top: 16px; }
.kv2 { margin-top: 12px; }
.k { width: 103px; flex: none; }
.caret { border-left: 1px solid #111; height: 15px; line-height: 15px; }
.shield { width: 14px; height: 16px; margin-left: 11px; }
.link { color: #0067c0; margin-left: 3px; }
.atabs { margin-top: 15px; height: 22px; box-sizing: border-box; border-bottom: 1px solid #b0b0b0; display: flex; padding-left: 1px; }
.atab { box-sizing: border-box; height: 22px; line-height: 21px; text-align: center; background: #f0f0f0; border: 1px solid #dcdcdc; border-bottom: none; }
.atab.on { background: #f9f9f9; position: relative; }
.desc { margin: 16px 0 0 11px; line-height: 16px; white-space: nowrap; }
.entries { margin-top: 10px; }
.acl { width: 721px; height: 193px; margin: 6px 0 0 9px; box-sizing: border-box; border: 1px solid #666; }
.acl-row { display: grid; grid-template-columns: 200px 50px 143px 143px 1fr; height: 19px; line-height: 19px; }
.acl-row span { padding-left: 7px; white-space: nowrap; overflow: hidden; }
.acl-head { height: 25px; line-height: 24px; }
.acl-head span { height: 24px; border-right: 1px solid #e4e4e4; box-sizing: border-box; }
.acl-head span:first-child { padding-left: 6px; }
.who { display: flex; align-items: center; gap: 2px; padding-left: 4px !important; }
.acl-btns { display: flex; gap: 9px; margin: 12px 0 0 10px; }
.w84 { width: 84px; }
.replace { display: flex; align-items: center; height: 16px; margin: 23px 0 0 10px; }
.box { width: 12px; height: 12px; box-sizing: border-box; border: 1px solid #555; border-radius: 3px; margin-right: 3px; background: #f8f8f8; }
.adv-foot { display: flex; justify-content: flex-end; gap: 10px; padding: 8px 12px 0 0; }
.w72 { width: 72px; }
</style>
